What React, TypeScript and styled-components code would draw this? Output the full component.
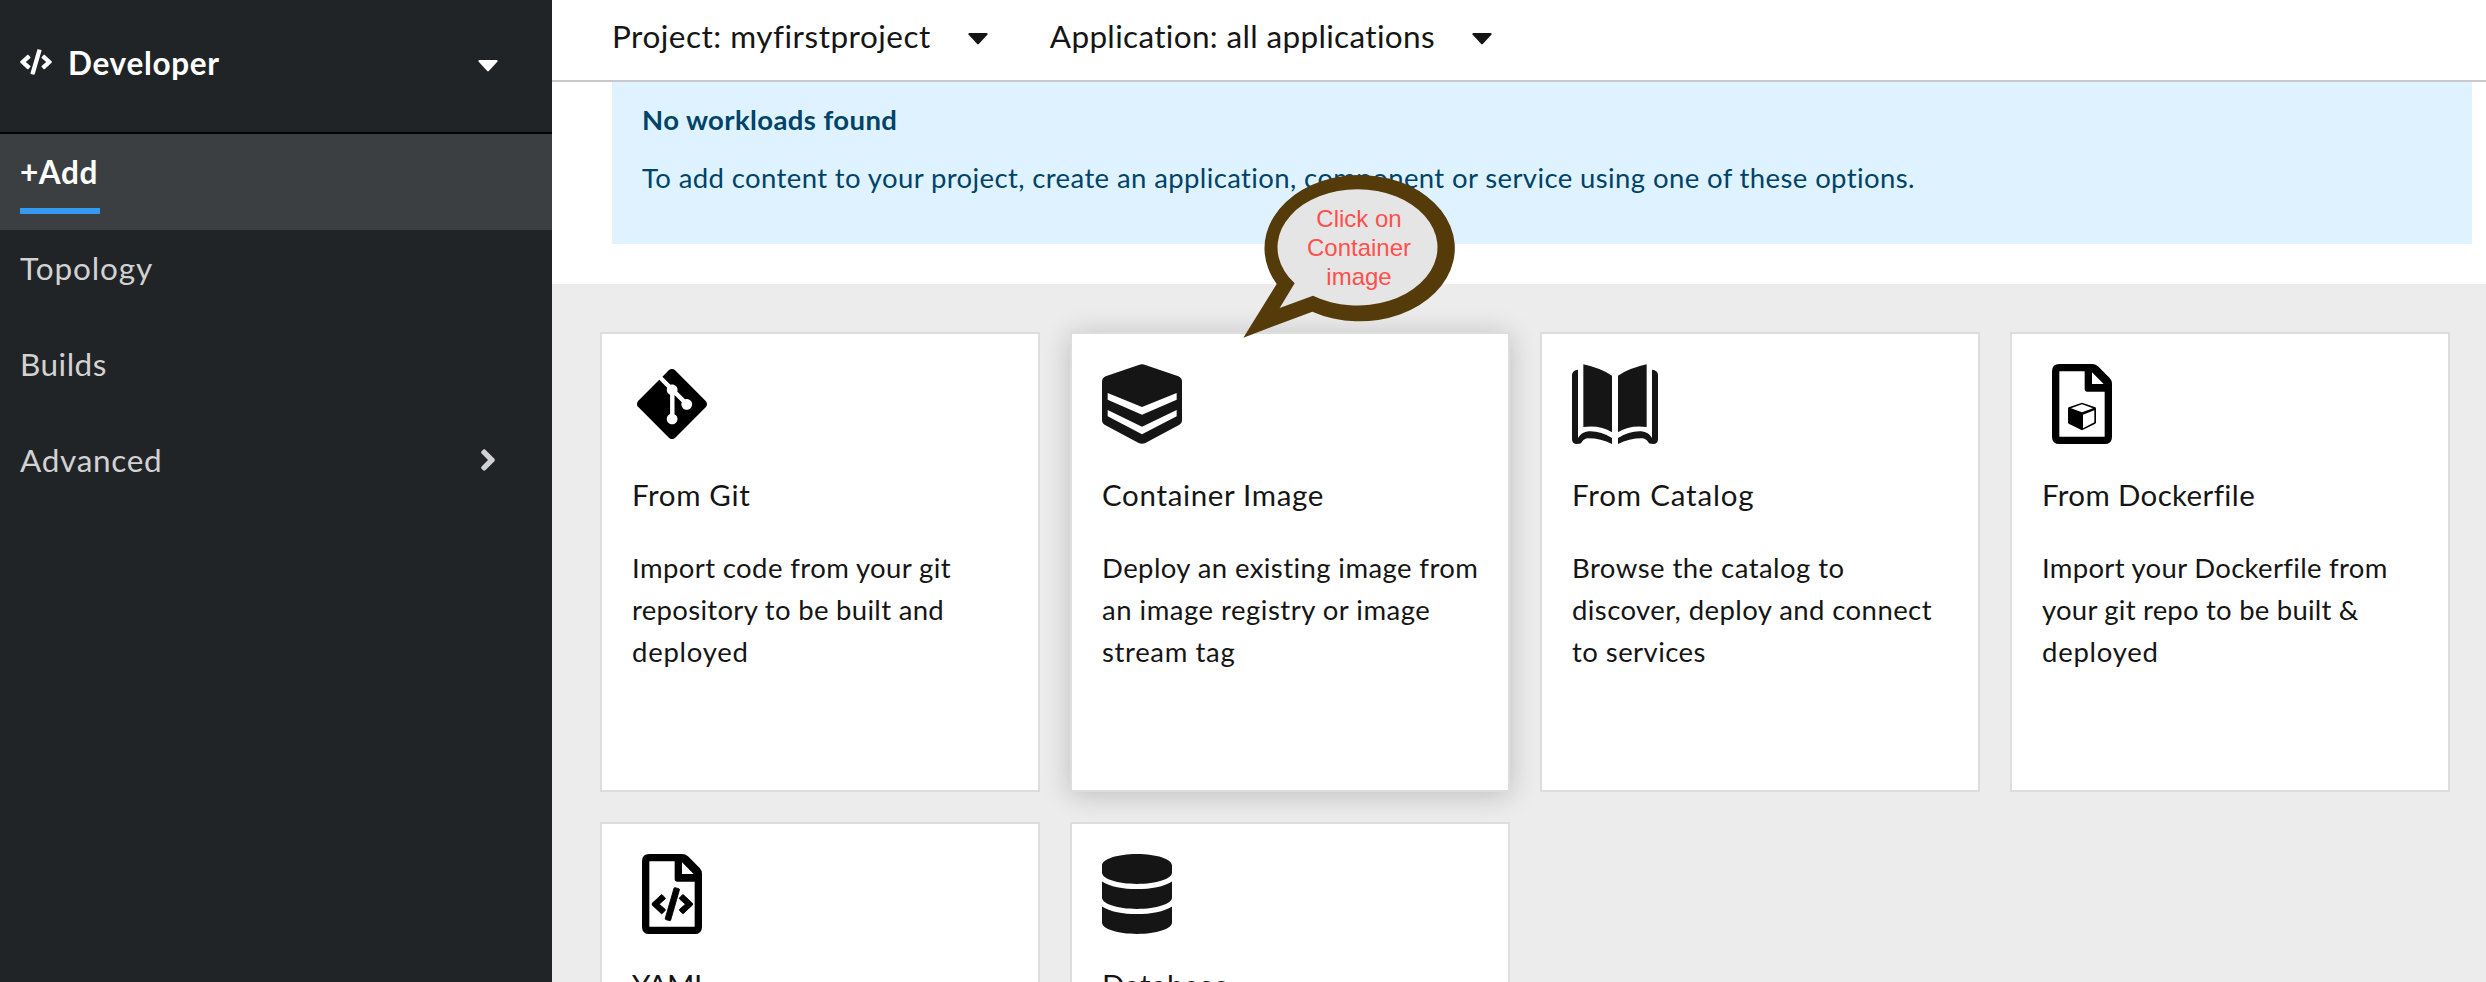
import React from "react";
import styled, { createGlobalStyle } from "styled-components";
import { FaAngleRight, FaCode, FaDatabase } from "react-icons/fa";
import { SiGit } from "react-icons/si";

const GlobalStyle = createGlobalStyle`
  *, *::before, *::after { box-sizing: border-box; }
  body {
    margin: 0;
    overflow: hidden;
    background: #fff;
    color: #151515;
    font-family: Lato, "Open Sans", sans-serif;
  }
`;

const Shell = styled.div`
  display: flex;
  width: 100%;
  height: 982px;
  overflow: hidden;
`;

const Sidebar = styled.nav`
  flex: 0 0 552px;
  background: #212427;
`;

const Perspective = styled.div`
  display: flex;
  align-items: center;
  height: 134px;
  padding: 0 54px 8px 20px;
  border-bottom: 2px solid #030303;
  color: #fff;
`;

const Tracked = styled.span<{ $tracking: number }>`
  letter-spacing: ${(p) => p.$tracking}px;
  white-space: nowrap;
`;

const PerspectiveName = styled(Tracked)`
  margin: 1px 0 0 16px;
  font-size: 31.5px;
  font-weight: 700;
`;

const PerspectiveCaret = styled.span`
  display: flex;
  margin: 7px 0 0 auto;
`;

const NavItem = styled.div<{ $active?: boolean }>`
  position: relative;
  display: flex;
  align-items: center;
  justify-content: space-between;
  height: 96px;
  padding: 0 47px 20px 20px;
  font-size: 31.5px;
  font-weight: ${(p) => (p.$active ? 700 : 400)};
  color: ${(p) => (p.$active ? "#fff" : "#d2d2d2")};
  background: ${(p) => (p.$active ? "#3c3f42" : "transparent")};

  &::after {
    content: "";
    display: ${(p) => (p.$active ? "block" : "none")};
    position: absolute;
    left: 20px;
    bottom: 16px;
    width: 80px;
    height: 6px;
    background: #359af2;
  }
`;

const Main = styled.main`
  display: flex;
  flex-direction: column;
  flex: 1;
  min-width: 0;
`;

const Toolbar = styled.header`
  display: flex;
  flex: 0 0 82px;
  align-items: center;
  gap: 62px;
  padding: 0 60px 8px;
  border-bottom: 2px solid #c9c9c9;
`;

const Selector = styled.div`
  display: flex;
  align-items: center;
  gap: 37px;
  font-size: 31.5px;

  svg { margin-top: 5px; }
`;

const Notice = styled.section`
  flex: 0 0 202px;
  padding: 0 14px 40px 60px;
`;

const Alert = styled.div`
  display: flex;
  flex-direction: column;
  gap: 16px;
  height: 162px;
  padding: 17px 30px;
  background: #def3ff;
  color: #004368;
  font-size: 27.5px;
  line-height: 42px;
`;

const AlertTitle = styled(Tracked)`
  font-weight: 700;
`;

const Catalog = styled.section`
  display: grid;
  grid-template-columns: repeat(4, 440px);
  grid-auto-rows: 460px;
  gap: 30px;
  flex: 1;
  min-height: 0;
  padding: 48px;
  background: #ececec;
`;

const Card = styled.article<{ $raised?: boolean }>`
  padding: 30px;
  border: 2px solid #ddd;
  background: #fff;
  box-shadow: ${(p) => (p.$raised ? "0 3px 26px rgba(3, 3, 3, 0.2)" : "none")};
`;

const CardIcon = styled.div<{ $inset?: number }>`
  display: flex;
  align-items: center;
  height: 80px;
  padding-left: ${(p) => p.$inset ?? 0}px;

  svg { flex: none; }
`;

const CardTitle = styled.h2`
  margin: 31px 0 0;
  font-size: 29.5px;
  font-weight: 400;
  line-height: 40px;
`;

const CardText = styled.p`
  display: flex;
  flex-direction: column;
  margin: 32px 0 0;
  font-size: 27.5px;
  line-height: 42px;
`;

const Callout = styled.div`
  position: absolute;
  left: 1243px;
  top: 174px;
  width: 212px;
  height: 165px;

  svg { display: block; }
`;

const CalloutText = styled.div`
  position: absolute;
  left: 21px;
  top: 30px;
  width: 190px;
  color: #ff504c;
  font-family: "Liberation Sans", Arial, sans-serif;
  font-size: 24px;
  line-height: 29px;
  text-align: center;
`;

const Caret = () => (
  <svg width="20" height="12" viewBox="0 0 20 12" fill="currentColor">
    <path d="M1.4 0H18.6Q20.2.4 19.3 1.8L11 10.8Q10 11.8 9 10.8L.7 1.8Q-.2.4 1.4 0Z" />
  </svg>
);

const LayersIcon = () => (
  <svg width="80" height="80" viewBox="0 0 240 240">
    <path
      fill="#151515"
      d="M110 3Q120-2 130 3L229 37Q240 42 240 53V168Q240 178 231 183L130 237Q120 242 110 237L9 183Q0 178 0 168V53Q0 42 11 37Z"
    />
    <path fill="#fff" d="M17 87L120 129L224 87V107L120 152L17 107ZM17 138L120 188L224 138V157L120 211L17 157Z" />
  </svg>
);

const bookHalf =
  "M34 1Q85 12 120 35V205Q85 182 34 189ZM18 17V222Q28 204 50 202Q85 200 120 222V240Q85 222 45 223Q33 226 27 238Q24 240 12 240Q0 238 0 226V33Q0 19 18 17Z";

const BookIcon = () => (
  <svg width="86" height="80" viewBox="0 0 258 240" fill="#151515">
    <path d={bookHalf} />
    <path d={bookHalf} transform="translate(258 0) scale(-1 1)" />
  </svg>
);

const FileIcon = ({ children }: { children: React.ReactNode }) => (
  <svg width="60" height="80" viewBox="0 0 180 240" color="#000">
    <path
      fillRule="evenodd"
      d="M22 0H120Q130 0 138 7L173 42Q180 49 180 60V218Q180 240 158 240H22Q0 240 0 218V22Q0 0 22 0ZM22 22V218H158V83H106Q98 83 98 74V22ZM120 25V60H155Z"
    />
    {children}
  </svg>
);

const DockerfileIcon = () => (
  <FileIcon>
    <path
      fillRule="evenodd"
      d="M90 116L130 130Q132 131 132 134V176L130 179L90 199L50 179L48 176V134Q48 131 50 130ZM90 121L57 133L90 145L123 133ZM93 152V193L127 175V139Z"
    />
  </FileIcon>
);

const YamlIcon = () => (
  <FileIcon>
    <FaCode x={29} y={88.5} size={124} stroke="#000" strokeWidth={14} />
  </FileIcon>
);

type Line = [text: string, tracking: number];

interface CatalogItem {
  title: Line;
  lines: Line[];
  icon: React.ReactNode;
  inset?: number;
  raised?: boolean;
}

const items: CatalogItem[] = [
  {
    title: ["From Git", 0.65],
    lines: [["Import code from your git", 0.4], ["repository to be built and", 0.31], ["deployed", 0.74]],
    icon: <SiGit size={70} color="#000" />,
    inset: 5,
  },
  {
    title: ["Container Image", 0.67],
    lines: [["Deploy an existing image from", 0.41], ["an image registry or image", 0.5], ["stream tag", 0.65]],
    icon: <LayersIcon />,
    raised: true,
  },
  {
    title: ["From Catalog", 0.82],
    lines: [["Browse the catalog to", 0.46], ["discover, deploy and connect", 0.42], ["to services", 0.45]],
    icon: <BookIcon />,
  },
  {
    title: ["From Dockerfile", 0.37],
    lines: [["Import your Dockerfile from", 0.31], ["your git repo to be built &", 0.22], ["deployed", 0.74]],
    icon: <DockerfileIcon />,
    inset: 10,
  },
  { title: ["YAML", -0.6], lines: [], icon: <YamlIcon />, inset: 10 },
  { title: ["Database", 0.8], lines: [], icon: <FaDatabase size={80} color="#151515" viewBox="0 0 448 512" preserveAspectRatio="xMinYMid meet" /> },
];

const navItems: { label: Line; active?: boolean; expandable?: boolean }[] = [
  { label: ["+Add", 0.6], active: true },
  { label: ["Topology", 0.9] },
  { label: ["Builds", 0.5] },
  { label: ["Advanced", 0.7], expandable: true },
];

export default function App() {
  return (
    <>
      <GlobalStyle />
      <Shell>
        <Sidebar>
          <Perspective>
            <FaCode size={32} />
            <PerspectiveName $tracking={0.7}>Developer</PerspectiveName>
            <PerspectiveCaret>
              <Caret />
            </PerspectiveCaret>
          </Perspective>
          {navItems.map(({ label: [text, tracking], active, expandable }) => (
            <NavItem key={text} $active={active}>
              <Tracked $tracking={tracking}>{text}</Tracked>
              {expandable && <FaAngleRight size={34} />}
            </NavItem>
          ))}
        </Sidebar>
        <Main>
          <Toolbar>
            <Selector>
              <Tracked $tracking={0.5}>Project: myfirstproject</Tracked>
              <Caret />
            </Selector>
            <Selector>
              <Tracked $tracking={0.34}>Application: all applications</Tracked>
              <Caret />
            </Selector>
          </Toolbar>
          <Notice>
            <Alert>
              <AlertTitle $tracking={0.4}>No workloads found</AlertTitle>
              <Tracked $tracking={0.39}>
                To add content to your project, create an application, component or service using one of these options.
              </Tracked>
            </Alert>
          </Notice>
          <Catalog>
            {items.map(({ title, lines, icon, inset, raised }) => (
              <Card key={title[0]} $raised={raised}>
                <CardIcon $inset={inset}>{icon}</CardIcon>
                <CardTitle>
                  <Tracked $tracking={title[1]}>{title[0]}</Tracked>
                </CardTitle>
                <CardText>
                  {lines.map(([text, tracking]) => (
                    <Tracked key={text} $tracking={tracking}>
                      {text}
                    </Tracked>
                  ))}
                </CardText>
              </Card>
            ))}
          </Catalog>
        </Main>
      </Shell>
      <Callout>
        <svg width="212" height="165" viewBox="192 72 636 495">
          <path fill="#543b09" d="M293 402A285.5 219.5 0 1 1 400 485L193 563Z" />
          <path fill="#e5e5e5" d="M347 400A240 174.5 0 1 1 402 437L302 474Z" />
        </svg>
        <CalloutText>
          Click on
          <br />
          Container
          <br />
          image
        </CalloutText>
      </Callout>
    </>
  );
}
